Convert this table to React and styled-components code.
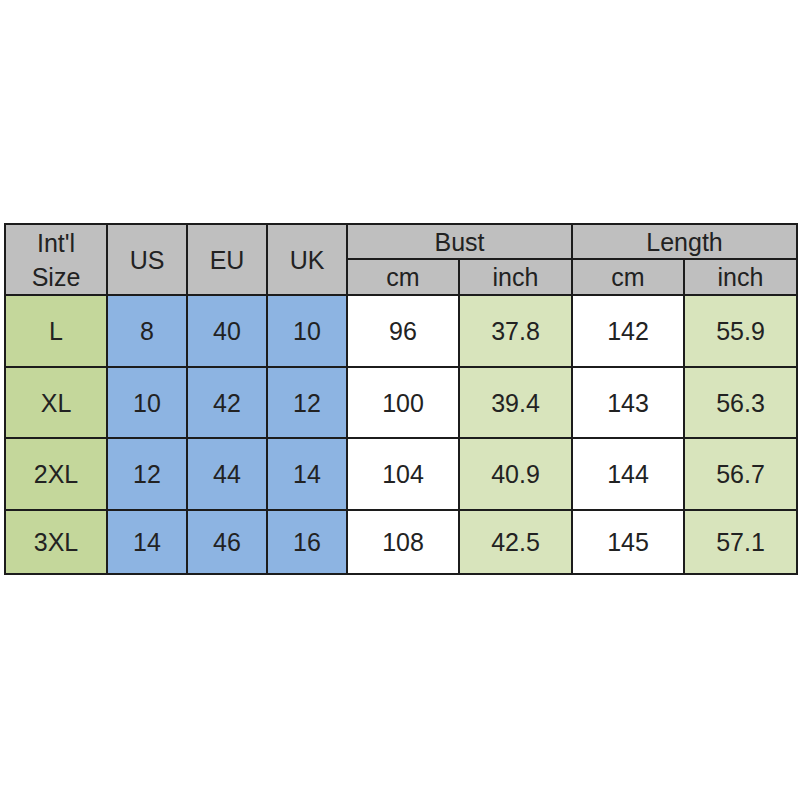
import styled, { createGlobalStyle } from 'styled-components';

const GlobalStyle = createGlobalStyle`
  html, body {
    margin: 0;
    padding: 0;
    background: #ffffff;
  }
`;

const Page = styled.div`
  width: 800px;
  height: 800px;
  padding: 223px 0 0 4px;
  box-sizing: border-box;
`;

const Table = styled.table`
  border-collapse: collapse;
  table-layout: fixed;
  width: 793px;
  font-family: 'Liberation Sans', Arial, sans-serif;
  font-size: 25px;
  color: #222222;
  border: 2px solid #1c1c1c;
`;

const Col = styled.col`
  width: ${p => p.$w}px;
`;

const fills = {
  head: '#bfbfbf',
  size: '#c4d79b',
  blue: '#8db4e2',
  white: '#ffffff',
  inch: '#d8e4bc'
};

const Cell = styled.td`
  border: 2px solid #1c1c1c;
  background: ${p => fills[p.$fill]};
  text-align: center;
  vertical-align: middle;
  padding: 0;
  line-height: 24px;
`;

const HeadCell = styled.th`
  border: 2px solid #1c1c1c;
  background: ${fills.head};
  text-align: center;
  vertical-align: middle;
  font-weight: 400;
  padding: 0;
  line-height: ${p => (p.$tall ? '34px' : '24px')};
`;

const Row = styled.tr`
  height: ${p => p.$h}px;
`;

const widths = [102, 80, 80, 80, 112, 113, 112, 113];

const rows = [
  ['L', '8', '40', '10', '96', '37.8', '142', '55.9'],
  ['XL', '10', '42', '12', '100', '39.4', '143', '56.3'],
  ['2XL', '12', '44', '14', '104', '40.9', '144', '56.7'],
  ['3XL', '14', '46', '16', '108', '42.5', '145', '57.1']
];

const rowFills = ['size', 'blue', 'blue', 'blue', 'white', 'inch', 'white', 'inch'];
const rowHeights = [72, 71, 72, 64];

const App = () => (
  <Page>
    <GlobalStyle />
    <Table>
      <colgroup>
        {widths.map((w, i) => (
          <Col key={i} $w={w} />
        ))}
      </colgroup>
      <thead>
        <Row $h={35}>
          <HeadCell rowSpan={2} $tall>
            Int'l
            <br />
            Size
          </HeadCell>
          <HeadCell rowSpan={2}>US</HeadCell>
          <HeadCell rowSpan={2}>EU</HeadCell>
          <HeadCell rowSpan={2}>UK</HeadCell>
          <HeadCell colSpan={2}>Bust</HeadCell>
          <HeadCell colSpan={2}>Length</HeadCell>
        </Row>
        <Row $h={36}>
          <HeadCell>cm</HeadCell>
          <HeadCell>inch</HeadCell>
          <HeadCell>cm</HeadCell>
          <HeadCell>inch</HeadCell>
        </Row>
      </thead>
      <tbody>
        {rows.map((r, i) => (
          <Row key={r[0]} $h={rowHeights[i]}>
            {r.map((v, j) => (
              <Cell key={j} $fill={rowFills[j]}>{v}</Cell>
            ))}
          </Row>
        ))}
      </tbody>
    </Table>
  </Page>
);

export default App;
